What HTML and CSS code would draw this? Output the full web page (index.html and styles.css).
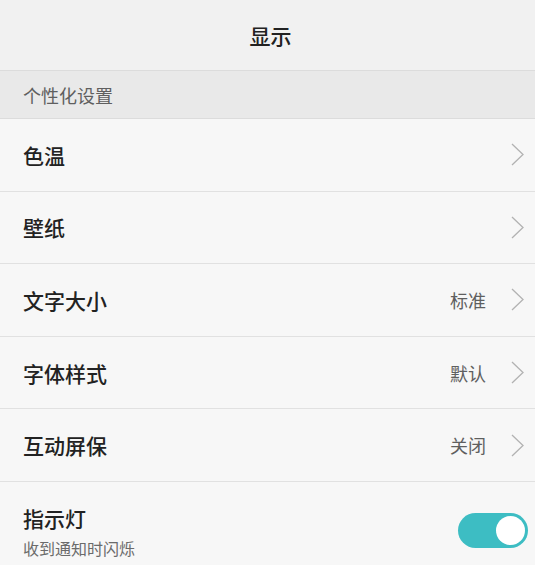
FILE: index.html
```html
<!DOCTYPE html>
<html lang="zh-CN">

<head>
    <meta charset="UTF-8">
    <meta name="viewport" content="width=device-width, initial-scale=1.0">
    <title>显示</title>
    <link rel="stylesheet" href="styles.css">
</head>

<body>
    <div id="page">
        <div class="title-bar">显示</div>
        <div class="group-title">个性化设置</div>
        <ul class="list">
            <li class="item">
                <span class="name">色温</span>
                <svg class="arrow" viewBox="0 0 13 23"><polyline points="1,1 12,11.5 1,22" /></svg>
            </li>
            <li class="item">
                <span class="name">壁纸</span>
                <svg class="arrow" viewBox="0 0 13 23"><polyline points="1,1 12,11.5 1,22" /></svg>
            </li>
            <li class="item">
                <span class="name">文字大小</span>
                <span class="value">标准</span>
                <svg class="arrow" viewBox="0 0 13 23"><polyline points="1,1 12,11.5 1,22" /></svg>
            </li>
            <li class="item">
                <span class="name">字体样式</span>
                <span class="value">默认</span>
                <svg class="arrow" viewBox="0 0 13 23"><polyline points="1,1 12,11.5 1,22" /></svg>
            </li>
            <li class="item">
                <span class="name">互动屏保</span>
                <span class="value">关闭</span>
                <svg class="arrow" viewBox="0 0 13 23"><polyline points="1,1 12,11.5 1,22" /></svg>
            </li>
            <li class="item item-tall">
                <div class="text">
                    <span class="name">指示灯</span>
                    <span class="desc">收到通知时闪烁</span>
                </div>
                <span class="switch on"><i></i></span>
            </li>
        </ul>
    </div>
</body>

</html>
```

FILE: styles.css
```css
* {
    padding: 0;
    margin: 0;
    box-sizing: border-box;
}

li {
    list-style: none;
}

body {
    font-family: "Noto Sans CJK SC", "Noto Sans", sans-serif;
    background: #f7f7f7;
    color: #222;
}

#page {
    width: 535px;
    height: 565px;
    overflow: hidden;
}

.title-bar {
    height: 71px;
    line-height: 70px;
    text-align: center;
    font-size: 21px;
    font-weight: 500;
    background: #f1f1f1;
    border-bottom: 1px solid #dcdcdc;
    padding-left: 6px;
}

.group-title {
    height: 48px;
    line-height: 48px;
    padding-left: 23px;
    font-size: 18px;
    color: #5f5f5f;
    background: #e9e9e9;
    border-bottom: 1px solid #dcdcdc;
}

.item {
    display: flex;
    align-items: center;
    height: 72.6px;
    padding: 0 11px 0 23px;
    border-bottom: 1px solid #e1e1e1;
    background: #f7f7f7;
}

.item .name {
    flex: 1;
    font-size: 21px;
    font-weight: 500;
    color: #222;
}

.item .value {
    font-size: 18px;
    color: #5f5f5f;
    margin-right: 25px;
}

.arrow {
    width: 13px;
    height: 23px;
    fill: none;
    stroke: #b2b2b2;
    stroke-width: 1.3;
}

.item-tall {
    height: 90px;
    align-items: flex-start;
    padding-top: 21px;
    border-bottom: none;
    padding-right: 7px;
}

.item-tall .text {
    flex: 1;
    display: flex;
    flex-direction: column;
}

.item-tall .name {
    line-height: 30px;
}

.desc {
    font-size: 16px;
    color: #6b6b6b;
    line-height: 26px;
    margin-top: 2px;
}

.switch {
    width: 70px;
    height: 35px;
    border-radius: 18px;
    background: #ccc;
    padding: 3px;
    display: flex;
    margin-top: 10px;
}

.switch i {
    width: 29px;
    height: 29px;
    border-radius: 50%;
    background: #fff;
}

.switch.on {
    background: #3dbdc3;
    justify-content: flex-end;
}
```
